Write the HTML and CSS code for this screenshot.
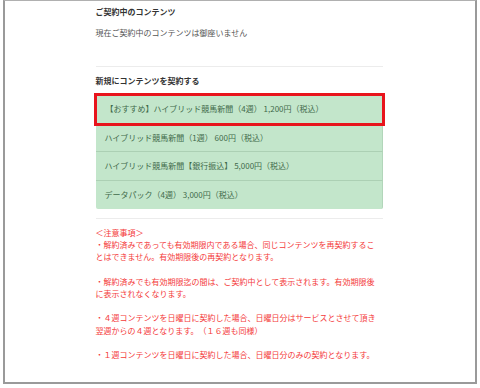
FILE: index.html
```html
<!DOCTYPE html>
<html lang="ja">
<head>
    <meta charset="UTF-8">
    <meta name="viewport" content="width=device-width, initial-scale=1.0">
    <title>コンテンツ契約</title>
    <link rel="stylesheet" href="styles.css">
</head>
<body>

<div class="frame">
    <div class="container">
        <h2 class="section-title">ご契約中のコンテンツ</h2>
        <p class="empty">現在ご契約中のコンテンツは御座いません</p>
        <hr class="sep sep-top">

        <h2 class="section-title">新規にコンテンツを契約する</h2>
        <ul class="plan-list">
            <li class="plan recommended">【おすすめ】ハイブリッド競馬新聞（4週） 1,200円（税込）</li>
            <li class="plan">ハイブリッド競馬新聞（1週） 600円（税込）</li>
            <li class="plan">ハイブリッド競馬新聞【銀行振込】 5,000円（税込）</li>
            <li class="plan">データパック（4週） 3,000円（税込）</li>
        </ul>
        <hr class="sep sep-bottom">

        <p class="notes">
            ＜注意事項＞<br>
            ・解約済みであっても有効期限内である場合、同じコンテンツを再契約することはできません。有効期限後の再契約となります。<br>
            <br>
            ・解約済みでも有効期限迄の間は、ご契約中として表示されます。有効期限後に表示されなくなります。<br>
            <br>
            ・４週コンテンツを日曜日に契約した場合、日曜日分はサービスとさせて頂き翌週からの４週となります。（１６週も同様）<br>
            <br>
            ・１週コンテンツを日曜日に契約した場合、日曜日分のみの契約となります。
        </p>
    </div>
</div>

</body>
</html>
```

FILE: styles.css
```css
* {
    margin: 0;
    padding: 0;
    box-sizing: border-box;
}
body {
    font-family: "Noto Sans CJK JP", "Noto Sans", sans-serif;
    font-size: 8px;
    line-height: 12px;
    background-color: #fff;
    color: #555;
}
.frame {
    margin: 0 3px;
    height: 384px;
    border: 1px solid #9a9a9a;
    border-left-width: 2px;
    border-right-width: 2px;
    border-bottom-width: 2px;
    border-top-color: #b0b0b0;
    padding-top: 5px;
}
.container {
    width: 287px;
    margin: 0 auto;
    position: relative;
    left: -1px;
}
.section-title {
    font-size: 8px;
    font-weight: bold;
    color: #333;
}
.empty {
    margin-top: 8.5px;
}
.sep {
    border: none;
    border-top: 1px solid #ececec;
}
.sep-top {
    margin-top: 27px;
    margin-bottom: 8px;
}
.plan-list {
    list-style: none;
    margin-top: 8.5px;
    border-radius: 2px;
}
.plan {
    background-color: #c3e6cb;
    color: #3f6a4a;
    padding: 8px 9px;
    height: 28.5px;
    border-right: 1px solid #b2d6ba;
    border-bottom: 1px solid #acd0b4;
}
.plan:last-child {
    border-bottom: none;
    border-radius: 0 0 2px 2px;
}
.recommended {
    padding-left: 10px;
    outline: 3px solid #e8141c;
    outline-offset: -1px;
}
.sep-bottom {
    margin-top: 9px;
}
.notes {
    margin-top: 8px;
    color: #f43a3a;
    line-height: 12.2px;
    text-spacing-trim: space-all;
    width: 286px;
}
```
